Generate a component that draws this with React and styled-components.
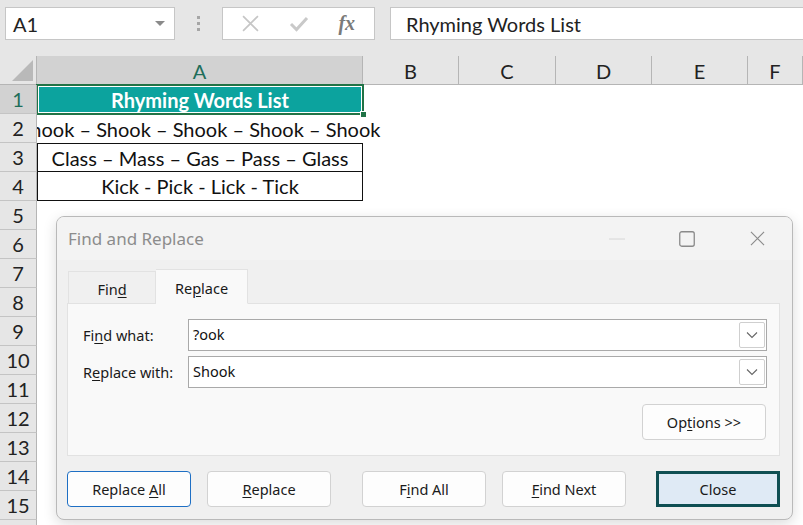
import React from 'react';
import styled, { createGlobalStyle } from 'styled-components';

const GlobalStyle = createGlobalStyle`
  html, body { margin: 0; padding: 0; }
  body { background: #e6e6e6; }
  * { box-sizing: border-box; }
`;

const CELL_FONT = `Lato, "Liberation Sans", sans-serif`;
const UI_FONT = `"Noto Sans", "Open Sans", sans-serif`;

const Screen = styled.div`
  position: relative;
  width: 803px;
  height: 525px;
  overflow: hidden;
  background: #e6e6e6;
  font-family: ${CELL_FONT};
`;

// ---- formula bar ----
const FormulaBar = styled.div`
  height: 56px;
  display: flex;
  align-items: flex-start;
  padding: 7px 0 0 5px;
`;

const NameBox = styled.div`
  width: 170px;
  height: 33px;
  background: #fff;
  border: 1px solid #c6c6c6;
  display: flex;
  align-items: center;
  justify-content: space-between;
  padding: 0 9px 0 7px;
  font-size: 20px;
  color: #222;
`;

const Caret = styled.span`
  width: 0;
  height: 0;
  border-left: 5px solid transparent;
  border-right: 5px solid transparent;
  border-top: 5px solid #8a8a8a;
`;

const Grip = styled.div`
  width: 47px;
  height: 33px;
  display: flex;
  flex-direction: column;
  align-items: center;
  justify-content: center;
  gap: 3px;
  span {
    width: 3px;
    height: 3px;
    background: #a6a6a6;
  }
`;

const IconBox = styled.div`
  width: 153px;
  height: 33px;
  background: #fff;
  border: 1px solid #c6c6c6;
  display: flex;
  align-items: center;
  justify-content: space-around;
  padding: 0 4px;
`;

const Fx = styled.span`
  font-family: "Liberation Serif", "DejaVu Serif", serif;
  font-style: italic;
  font-weight: bold;
  font-size: 20px;
  color: #7a7a7a;
`;

const FormulaInput = styled.div`
  flex: 1;
  margin-left: 15px;
  height: 33px;
  background: #fff;
  border-top: 1px solid #c6c6c6;
  border-bottom: 1px solid #c6c6c6;
  border-left: 1px solid #c6c6c6;
  display: flex;
  align-items: center;
  padding-left: 15px;
  font-size: 20px;
  color: #222;
`;

// ---- sheet ----
const Sheet = styled.div`
  display: grid;
  grid-template-columns: 37px 326px 96px 97px 96px 96px 1fr;
  grid-auto-rows: 29px;
  background: #fff;
`;

const Corner = styled.div`
  position: relative;
  background: #e6e6e6;
  border-right: 1px solid #b5b5b5;
  border-bottom: 1px solid #b5b5b5;
  &::after {
    content: '';
    position: absolute;
    right: 3px;
    bottom: 3px;
    width: 0;
    height: 0;
    border-left: 21px solid transparent;
    border-bottom: 21px solid #b9b9b9;
  }
`;

const ColHead = styled.div`
  background: ${p => (p.$active ? '#d2d2d2' : '#e6e6e6')};
  border-right: 1px solid #b5b5b5;
  border-bottom: 1px solid ${p => (p.$active ? '#217346' : '#b5b5b5')};
  display: flex;
  align-items: center;
  justify-content: center;
  padding-top: 2px;
  font-size: 20px;
  color: ${p => (p.$active ? '#1e6e5a' : '#222')};
`;

const RowHead = styled.div`
  position: relative;
  z-index: 2;
  background: ${p => (p.$active ? '#d2d2d2' : '#e6e6e6')};
  border-right: 1px solid #b5b5b5;
  border-bottom: 1px solid #c4c4c4;
  display: flex;
  align-items: center;
  justify-content: center;
  font-size: 20px;
  color: ${p => (p.$active ? '#1e6e5a' : '#222')};
`;

const Cell = styled.div`
  display: flex;
  align-items: center;
  justify-content: center;
  white-space: nowrap;
  font-size: 20px;
  color: #111;
  border-left: ${p => (p.$boxed ? '1px solid #111' : 'none')};
  border-right: ${p => (p.$boxed ? '1px solid #111' : 'none')};
  border-bottom: ${p => (p.$boxed ? '1px solid #111' : 'none')};
  border-top: ${p => (p.$top ? '1px solid #111' : 'none')};
`;

const TitleCell = styled(Cell)`
  position: relative;
  z-index: 1;
  background: #0ca39e;
  color: #fff;
  font-weight: bold;
  &::after {
    content: '';
    position: absolute;
    inset: -1px;
    border: 2px solid #217346;
    box-shadow: inset 0 0 0 1px #fff;
    pointer-events: none;
  }
`;

const FillHandle = styled.span`
  position: absolute;
  right: -4px;
  bottom: -4px;
  width: 7px;
  height: 7px;
  background: #217346;
  border: 1px solid #fff;
  z-index: 1;
`;

// ---- dialog ----
const Dialog = styled.div`
  position: absolute;
  left: 56px;
  top: 216px;
  width: 737px;
  height: 304px;
  z-index: 5;
  background: #f0f0f0;
  border: 1px solid #b9b9b9;
  border-radius: 8px;
  box-shadow: 0 4px 14px rgba(0, 0, 0, 0.14);
  overflow: hidden;
  font-family: ${UI_FONT};
  display: flex;
  flex-direction: column;
`;

const TitleBar = styled.div`
  height: 43px;
  background: #f3f3f3;
  display: flex;
  align-items: center;
  padding-left: 11px;
`;

const Title = styled.div`
  flex: 1;
  font-size: 17px;
  color: #8c8c8c;
`;

const WinControl = styled.div`
  width: 70px;
  height: 43px;
  display: flex;
  align-items: center;
  justify-content: center;
`;

const Body = styled.div`
  flex: 1;
  padding: 10px 12px 12px 10px;
  display: flex;
  flex-direction: column;
`;

const Tabs = styled.div`
  display: flex;
  align-items: flex-end;
  padding-left: 1px;
  height: 34px;
  position: relative;
  z-index: 1;
  margin-bottom: -1px;
`;

const Tab = styled.div`
  width: ${p => p.$w}px;
  height: ${p => (p.$active ? 35 : 33)}px;
  background: ${p => (p.$active ? '#f9f9f9' : '#f0f0f0')};
  border: 1px solid #e2e2e2;
  border-bottom: ${p => (p.$active ? '1px solid #f9f9f9' : '1px solid #e2e2e2')};
  border-left: ${p => (p.$active ? 'none' : '1px solid #e2e2e2')};
  display: flex;
  align-items: center;
  justify-content: center;
  padding-top: 3px;
  font-size: 14.5px;
  color: #1a1a1a;
`;

const Panel = styled.div`
  height: 153px;
  background: #f9f9f9;
  border: 1px solid #e2e2e2;
  padding: 15px 12px 0 15px;
  display: flex;
  flex-direction: column;
  gap: 5px;
`;

const FieldRow = styled.div`
  display: flex;
  align-items: center;
`;

const Label = styled.div`
  width: 105px;
  font-size: 14.5px;
  color: #1a1a1a;
`;

const Combo = styled.div`
  flex: 1;
  height: 32px;
  background: #fff;
  border: 1px solid #a9a9a9;
  display: flex;
  align-items: center;
  justify-content: space-between;
  padding: 0 1px 2px 4px;
  font-size: 14.5px;
  color: #111;
`;

const DropBtn = styled.div`
  width: 26px;
  height: 26px;
  margin-top: 2px;
  border: 1px solid #cfcfcf;
  border-radius: 2px;
  display: flex;
  align-items: center;
  justify-content: center;
`;

const OptionsRow = styled.div`
  display: flex;
  justify-content: flex-end;
  margin-top: 11px;
  padding-right: 1px;
`;

const Button = styled.div`
  width: 124px;
  height: 36px;
  margin-left: ${p => p.$gap || 0}px;
  background: ${p => (p.$default ? '#dfeaf5' : '#fdfdfd')};
  border: ${p =>
    p.$default ? '3px solid #0f4f53' : p.$focus ? '1px solid #1e6fc4' : '1px solid #d2d2d2'};
  border-radius: ${p => (p.$default ? 0 : 4)}px;
  display: flex;
  align-items: center;
  justify-content: center;
  font-size: 14.5px;
  color: #1a1a1a;
`;

const ButtonRow = styled.div`
  display: flex;
  margin-top: 15px;
`;

const U = styled.span`
  text-decoration: underline;
  text-underline-offset: 2px;
`;

const XIcon = ({ size, color, w = 1.4 }) => (
  <svg width={size} height={size} viewBox="0 0 16 16">
    <path d="M1 1 L15 15 M15 1 L1 15" stroke={color} strokeWidth={w} fill="none" />
  </svg>
);

const CheckIcon = () => (
  <svg width="20" height="16" viewBox="0 0 20 16">
    <path d="M2 8 L7.5 13.5 L18 2" stroke="#c9c9c9" strokeWidth="3" fill="none" />
  </svg>
);

const Chevron = () => (
  <svg width="12" height="8" viewBox="0 0 12 8">
    <path d="M1 1.5 L6 6.5 L11 1.5" stroke="#666" strokeWidth="1.1" fill="none" />
  </svg>
);

const columns = ['A', 'B', 'C', 'D', 'E', 'F'];
const rows = Array.from({ length: 16 }, (_, i) => i + 1);

const cellContent = (r) => {
  if (r === 1)
    return (
      <TitleCell>
        Rhyming Words List
        <FillHandle />
      </TitleCell>
    );
  if (r === 2) return <Cell>Shook – Shook – Shook – Shook – Shook</Cell>;
  if (r === 3)
    return (
      <Cell $boxed $top>
        Class – Mass – Gas – Pass – Glass
      </Cell>
    );
  if (r === 4) return <Cell $boxed>Kick - Pick - Lick - Tick</Cell>;
  return <Cell />;
};

export default function App() {
  return (
    <Screen>
      <GlobalStyle />
      <FormulaBar>
        <NameBox>
          A1
          <Caret />
        </NameBox>
        <Grip>
          <span />
          <span />
          <span />
        </Grip>
        <IconBox>
          <XIcon size={17} color="#c6c6c6" w={1.6} />
          <CheckIcon />
          <Fx>fx</Fx>
        </IconBox>
        <FormulaInput>Rhyming Words List</FormulaInput>
      </FormulaBar>

      <Sheet>
        <Corner />
        {columns.map((c) => (
          <ColHead key={c} $active={c === 'A'}>
            {c}
          </ColHead>
        ))}
        {rows.map((r) => (
          <React.Fragment key={r}>
            <RowHead $active={r === 1}>{r}</RowHead>
            {cellContent(r)}
            <Cell />
            <Cell />
            <Cell />
            <Cell />
            <Cell />
          </React.Fragment>
        ))}
      </Sheet>

      <Dialog>
        <TitleBar>
          <Title>Find and Replace</Title>
          <WinControl>
            <svg width="16" height="2" viewBox="0 0 16 2">
              <path d="M0 1 H16" stroke="#d6d6d6" strokeWidth="1" />
            </svg>
          </WinControl>
          <WinControl>
            <svg width="16" height="16" viewBox="0 0 16 16">
              <rect x="0.75" y="0.75" width="14.5" height="14.5" rx="2" stroke="#8a8a8a" strokeWidth="1.3" fill="none" />
            </svg>
          </WinControl>
          <WinControl>
            <XIcon size={15} color="#8a8a8a" w={1.2} />
          </WinControl>
        </TitleBar>
        <Body>
          <Tabs>
            <Tab $w={88}>
              <span>
                Fin<U>d</U>
              </span>
            </Tab>
            <Tab $w={92} $active>
              <span>
                Re<U>p</U>lace
              </span>
            </Tab>
          </Tabs>
          <Panel>
            <FieldRow>
              <Label>
                Fi<U>n</U>d what:
              </Label>
              <Combo>
                ?ook
                <DropBtn>
                  <Chevron />
                </DropBtn>
              </Combo>
            </FieldRow>
            <FieldRow>
              <Label>
                R<U>e</U>place with:
              </Label>
              <Combo>
                Shook
                <DropBtn>
                  <Chevron />
                </DropBtn>
              </Combo>
            </FieldRow>
            <OptionsRow>
              <Button>
                <span>
                  Op<U>t</U>ions &gt;&gt;
                </span>
              </Button>
            </OptionsRow>
          </Panel>
          <ButtonRow>
            <Button $focus>
              <span>
                Replace <U>A</U>ll
              </span>
            </Button>
            <Button $gap={16}>
              <span>
                <U>R</U>eplace
              </span>
            </Button>
            <Button $gap={31}>
              <span>
                F<U>i</U>nd All
              </span>
            </Button>
            <Button $gap={16}>
              <span>
                <U>F</U>ind Next
              </span>
            </Button>
            <Button $gap={30} $default>
              Close
            </Button>
          </ButtonRow>
        </Body>
      </Dialog>
    </Screen>
  );
}
